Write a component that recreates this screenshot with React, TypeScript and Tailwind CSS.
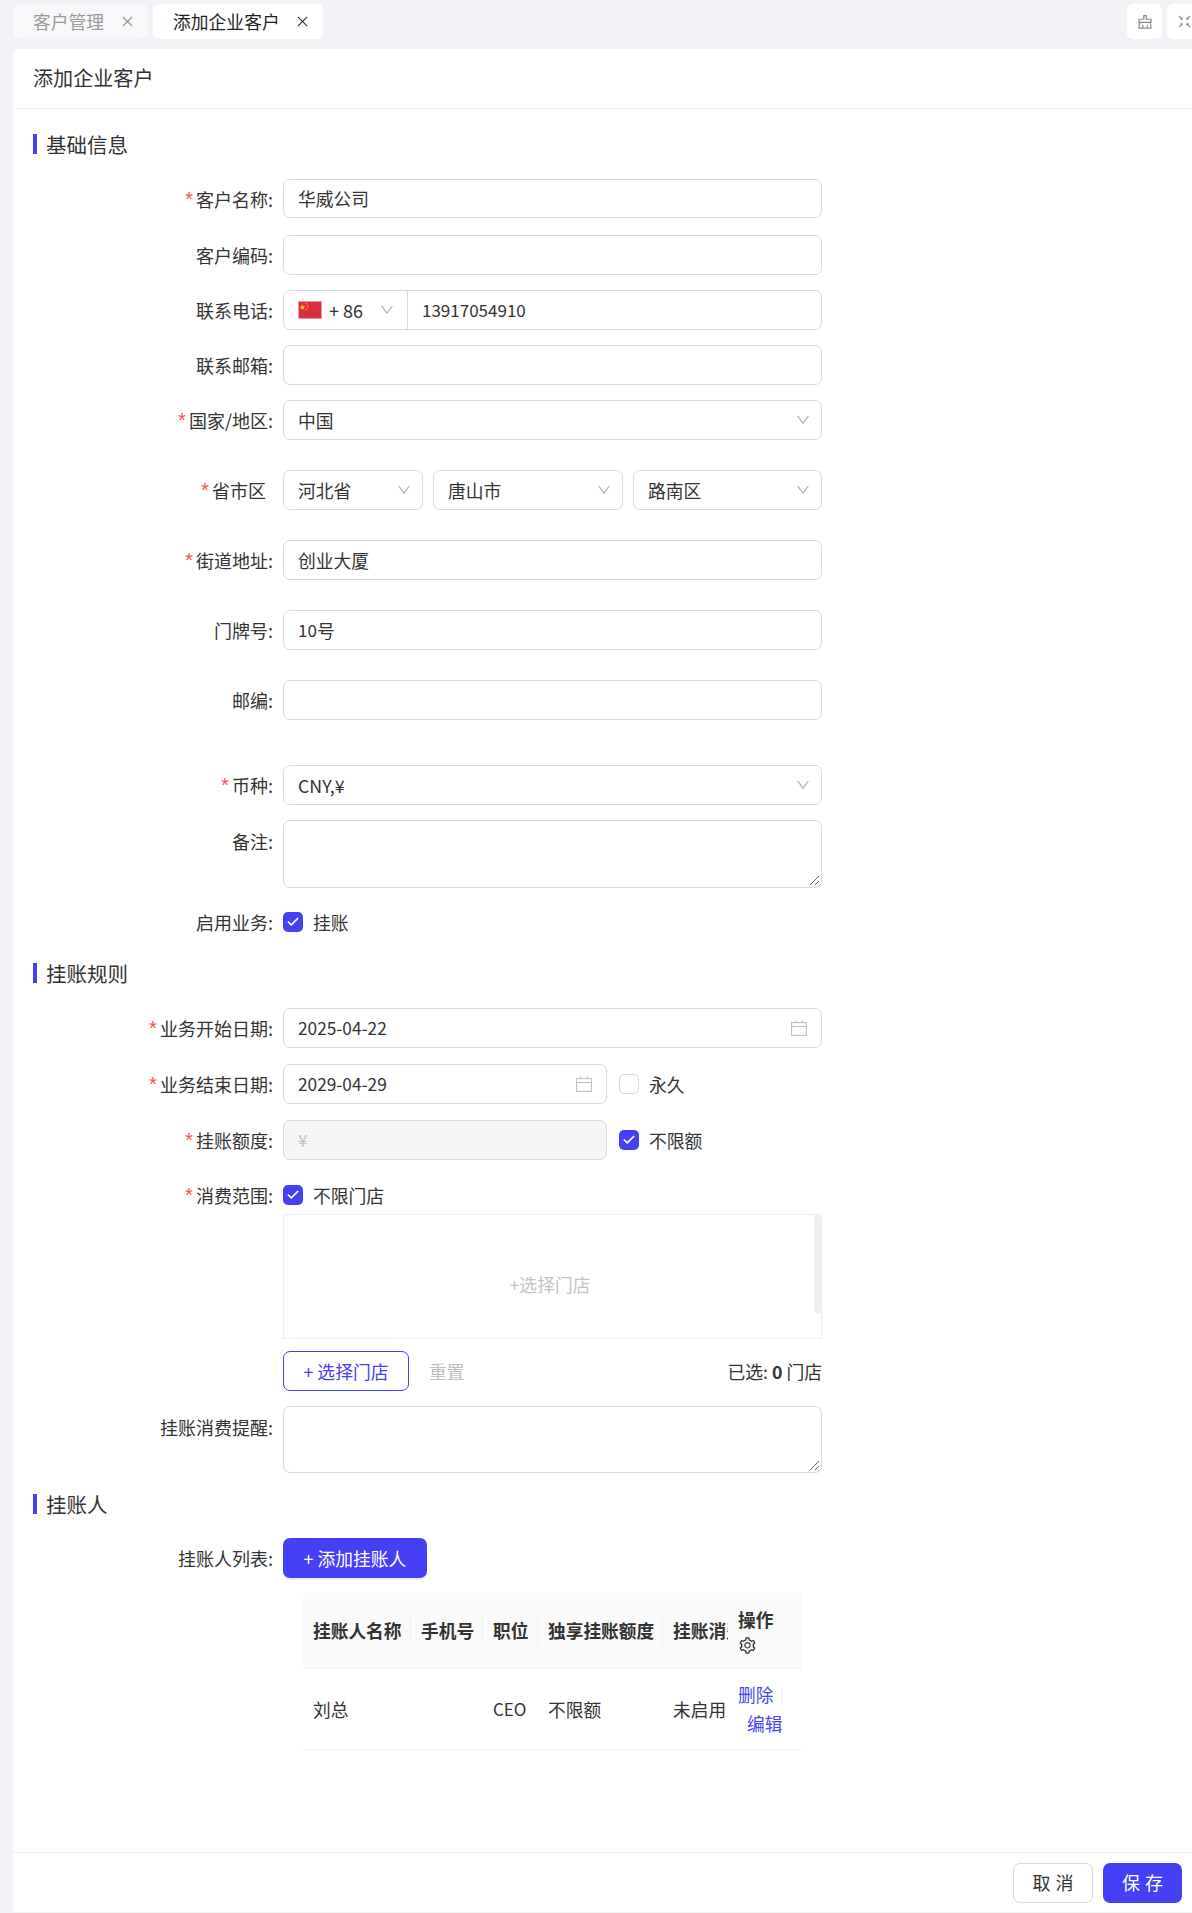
import React from 'react'
import { Check } from 'lucide-react'
import { AiOutlineClear, AiOutlineClose, AiOutlineDown, AiOutlineFullscreenExit, AiOutlineSetting } from 'react-icons/ai'

function Label({ text, required, colon = true }: { text: string; required?: boolean; colon?: boolean }) {
    return (
        <div className="w-[240px] shrink-0 flex items-center justify-end text-[18px] leading-[24px] text-[#333333] whitespace-nowrap">
            {required && <span className="text-[#ff4d4f] mr-[1px] text-[20px] leading-[24px] font-['Liberation_Mono'] translate-y-[3px]">*</span>}
            <span className={colon ? '' : 'mr-[7px]'}>{text}{colon ? ':' : ''}</span>
        </div>
    )
}

function Row({ label, required, colon, className, top, children }: { label: string; required?: boolean; colon?: boolean; className: string; top?: boolean; children: React.ReactNode }) {
    return (
        <div className={`flex gap-[10px] w-[789px] ${top ? 'items-start' : 'items-center'} ${className}`}>
            <div className={top ? 'pt-[9px]' : ''}>
                <Label text={label} required={required} colon={colon} />
            </div>
            {children}
        </div>
    )
}

function Input({ value, className = 'flex-1' }: { value?: React.ReactNode; className?: string }) {
    return (
        <div className={`h-full rounded-[7px] border border-[#d9d9d9] bg-white px-[14px] flex items-center text-[17.8px] text-[#333333] ${className}`}>
            {value}
        </div>
    )
}

function Select({ value, className = 'flex-1' }: { value: string; className?: string }) {
    return (
        <div className={`h-full rounded-[7px] border border-[#d9d9d9] bg-white pl-[14px] pr-[10px] flex items-center justify-between text-[17.8px] text-[#333333] ${className}`}>
            <span>{value}</span>
            <AiOutlineDown size={16} className="text-[#b5b5b5]" />
        </div>
    )
}

function TextArea() {
    return (
        <div className="relative rounded-[7px] border border-[#d9d9d9] bg-white flex-1 h-full">
            <svg className="absolute right-[1px] bottom-[1px]" width="11" height="11" viewBox="0 0 11 11" fill="none" stroke="#666666" strokeWidth="1">
                <path d="M1 10 L10 1 M6 10 L10 6" />
            </svg>
        </div>
    )
}

function Checkbox({ checked }: { checked?: boolean }) {
    return (
        <span className={`w-[20px] h-[20px] rounded-[5px] flex items-center justify-center shrink-0 ${checked ? 'bg-[#4640f5]' : 'border border-[#d9d9d9] bg-white'}`}>
            {checked && <Check size={14} strokeWidth={3} className="text-white" />}
        </span>
    )
}

function CheckLabel({ text, checked }: { text: string; checked?: boolean }) {
    return (
        <div className="flex items-center gap-[10px] text-[17.8px] text-[#333333]">
            <Checkbox checked={checked} />
            <span>{text}</span>
        </div>
    )
}

function Section({ title, className }: { title: string; className: string }) {
    return (
        <div className={`flex items-center gap-[9px] h-[24px] ${className}`}>
            <span className="w-[4px] h-[20px] bg-[#4640f5]" />
            <span className="text-[20.5px] text-[#333333]">{title}</span>
        </div>
    )
}

function CalendarIcon() {
    return (
        <svg width="16" height="16" viewBox="0 0 16 16" fill="none" stroke="#bfbfbf" strokeWidth="1.1" className="shrink-0">
            <rect x="0.6" y="2.6" width="14.8" height="12.8" />
            <path d="M0.6 6.5 H15.4 M4.5 0.5 V2.6 M11.5 0.5 V2.6" />
        </svg>
    )
}

function DateInput({ value, className }: { value: string; className: string }) {
    return (
        <div className={`h-full rounded-[7px] border border-[#d9d9d9] bg-white pl-[14px] pr-[14px] flex items-center justify-between text-[17.3px] text-[#333333] ${className}`}>
            <span>{value}</span>
            <CalendarIcon />
        </div>
    )
}

function Flag() {
    return (
        <svg width="24" height="18" viewBox="0 0 24 18" className="shrink-0">
            <rect width="24" height="18" fill="#f3c6cb" />
            <rect x="0.7" y="0.7" width="22.6" height="16.6" fill="#d8303f" />
            <path d="M4.5 3 L5.3 5.2 L7.6 5.2 L5.8 6.6 L6.4 8.8 L4.5 7.5 L2.6 8.8 L3.2 6.6 L1.4 5.2 L3.7 5.2 Z" fill="#f6c51e" />
            <circle cx="8.4" cy="2.6" r="0.6" fill="#f6c51e" />
            <circle cx="9.8" cy="4.4" r="0.6" fill="#f6c51e" />
            <circle cx="9.8" cy="6.6" r="0.6" fill="#f6c51e" />
            <circle cx="8.4" cy="8.4" r="0.6" fill="#f6c51e" />
        </svg>
    )
}

function Th({ children, className }: { children: React.ReactNode; className: string }) {
    return (
        <div className={`relative flex items-center pl-[10px] overflow-hidden whitespace-nowrap font-bold ${className}`}>
            {children}
            <span className="absolute right-0 top-[24px] h-[28px] w-px bg-[#f0f0f0]" />
        </div>
    )
}

export default function App() {
    return (
        <div className="w-[1192px] h-[1913px] overflow-hidden bg-[#f0f2f6] flex flex-col" style={{ fontFamily: '"Noto Sans CJK SC", "Liberation Sans", sans-serif' }}>
            {/* tabs */}
            <div className="h-[49px] shrink-0 pt-[4px] pl-[13px] flex gap-[5px] items-start">
                <div className="w-[135px] h-[35px] rounded-[6px] bg-[#f7f8fa] flex items-center pl-[20px] pr-[13px] justify-between text-[17.8px] text-[#9a9a9a]">
                    <span>客户管理</span>
                    <AiOutlineClose size={15} className="text-[#8c8c8c]" />
                </div>
                <div className="w-[170px] h-[35px] rounded-[6px] bg-white flex items-center pl-[20px] pr-[13px] justify-between text-[17.8px] text-[#1f1f1f]">
                    <span>添加企业客户</span>
                    <AiOutlineClose size={15} className="text-[#333333]" />
                </div>
                <div className="ml-auto flex gap-[5px] -mr-[10px]">
                    <div className="w-[35px] h-[35px] rounded-[6px] bg-white flex items-center justify-center"><AiOutlineClear size={18} className="text-[#8c8c8c]" /></div>
                    <div className="w-[35px] h-[35px] rounded-[6px] bg-white flex items-center justify-center"><AiOutlineFullscreenExit size={17} className="text-[#8c8c8c]" /></div>
                </div>
            </div>

            {/* card */}
            <div className="ml-[13px] h-[1863px] shrink-0 bg-white rounded-tl-[6px] flex flex-col">
                <div className="h-[60px] shrink-0 border-b border-[#f2f2f2] pl-[20px] flex items-center text-[20.1px] text-[#333333]">
                    添加企业客户
                </div>

                <div className="flex-1 pl-[20px]">
                    <Section title="基础信息" className="mt-[23px]" />
                    <Row label="客户名称" required className="h-[39px] mt-[23px]"><Input value="华威公司" /></Row>
                    <Row label="客户编码" className="h-[40px] mt-[17px]"><Input /></Row>
                    <Row label="联系电话" className="h-[40px] mt-[15px]">
                        <div className="flex-1 h-full rounded-[7px] border border-[#d9d9d9] flex items-center text-[17px] text-[#333333]">
                            <div className="w-[124px] h-full border-r border-[#d9d9d9] pl-[14px] pr-[12px] flex items-center">
                                <Flag />
                                <span className="ml-[7px] text-[18px]">+ 86</span>
                                <AiOutlineDown size={16} className="ml-auto text-[#b5b5b5]" />
                            </div>
                            <span className="pl-[14px]">13917054910</span>
                        </div>
                    </Row>
                    <Row label="联系邮箱" className="h-[40px] mt-[15px]"><Input /></Row>
                    <Row label="国家/地区" required className="h-[40px] mt-[15px]"><Select value="中国" /></Row>
                    <Row label="省市区" required colon={false} className="h-[40px] mt-[30px]">
                        <div className="flex-1 h-full flex gap-[10px]">
                            <Select value="河北省" className="w-[140px]" />
                            <Select value="唐山市" className="w-[190px]" />
                            <Select value="路南区" className="w-[189px]" />
                        </div>
                    </Row>
                    <Row label="街道地址" required className="h-[40px] mt-[30px]"><Input value="创业大厦" /></Row>
                    <Row label="门牌号" className="h-[40px] mt-[30px]"><Input value={<><span className="text-[17px]">10</span>号</>} /></Row>
                    <Row label="邮编" className="h-[40px] mt-[30px]"><Input /></Row>
                    <Row label="币种" required className="h-[40px] mt-[45px]"><Select value="CNY,¥" /></Row>
                    <Row label="备注" top className="h-[68px] mt-[15px]"><TextArea /></Row>
                    <Row label="启用业务" className="h-[24px] mt-[22px]"><CheckLabel text="挂账" checked /></Row>

                    <Section title="挂账规则" className="mt-[27px]" />
                    <Row label="业务开始日期" required className="h-[40px] mt-[23px]"><DateInput value="2025-04-22" className="flex-1" /></Row>
                    <Row label="业务结束日期" required className="h-[40px] mt-[16px]">
                        <DateInput value="2029-04-29" className="w-[324px]" />
                        <div className="ml-[2px]"><CheckLabel text="永久" /></div>
                    </Row>
                    <Row label="挂账额度" required className="h-[40px] mt-[16px]">
                        <div className="w-[324px] h-full rounded-[7px] border border-[#d9d9d9] bg-[#f5f5f5] px-[14px] flex items-center text-[17px] text-[#bfbfbf]">¥</div>
                        <div className="ml-[2px]"><CheckLabel text="不限额" checked /></div>
                    </Row>
                    <Row label="消费范围" required className="h-[24px] mt-[23px]"><CheckLabel text="不限门店" checked /></Row>

                    <div className="ml-[250px] w-[539px] mt-[7px]">
                        <div className="relative h-[125px] border border-[#eeeeee] pt-[15px] pr-[5px] flex items-center justify-center text-[17.8px] text-[#c4c4c4]">
                            <span>+选择门店</span>
                            <span className="absolute right-0 top-0 w-[7px] h-[98px] rounded-full bg-[#eeeeee]" />
                        </div>
                        <div className="mt-[12px] h-[40px] flex items-center text-[17.8px]">
                            <div className="w-[126px] h-full rounded-[7px] border border-[#4640f5] text-[#4640f5] flex items-center justify-center">+ 选择门店</div>
                            <span className="ml-[20px] text-[#bfbfbf]">重置</span>
                            <span className="ml-auto text-[#333333]">已选: <b className="font-bold">0</b> 门店</span>
                        </div>
                    </div>
                    <Row label="挂账消费提醒" top className="h-[67px] mt-[15px]"><TextArea /></Row>

                    <Section title="挂账人" className="mt-[19px]" />
                    <Row label="挂账人列表" className="h-[40px] mt-[22px]">
                        <div className="w-[144px] h-full rounded-[7px] bg-[#4640f5] text-white flex items-center justify-center text-[17.8px] shadow-[0_2px_0_rgba(70,64,245,0.1)]">+ 添加挂账人</div>
                    </Row>

                    <div className="ml-[270px] w-[499px] mt-[15px] text-[17.7px] text-[#333333]">
                        <div className="h-[76px] bg-[#fafafa] border-b border-[#f0f0f0] flex">
                            <Th className="w-[108px]">挂账人名称</Th>
                            <Th className="w-[72px]">手机号</Th>
                            <Th className="w-[55px]">职位</Th>
                            <Th className="w-[125px]">独享挂账额度</Th>
                            <div className="w-[65px] pl-[10px] overflow-hidden whitespace-nowrap font-bold flex items-center">挂账消费提醒</div>
                            <div className="w-[74px] pl-[10px] font-bold flex flex-col justify-center gap-[5px]">
                                <span className="leading-[24px]">操作</span>
                                <AiOutlineSetting size={19} />
                            </div>
                        </div>
                        <div className="h-[81px] border-b border-[#f0f0f0] flex items-center">
                            <div className="w-[108px] pl-[10px]">刘总</div>
                            <div className="w-[72px]" />
                            <div className="w-[55px] pl-[10px] text-[17px]">CEO</div>
                            <div className="w-[125px] pl-[10px]">不限额</div>
                            <div className="w-[65px] pl-[10px] whitespace-nowrap">未启用</div>
                            <div className="w-[74px] pl-[10px] text-[#4a45f0]">
                                <div className="flex items-center h-[29px]">
                                    <span>删除</span>
                                    <span className="ml-[8px] w-px h-[18px] bg-[#f0f0f0]" />
                                </div>
                                <div className="pl-[9px] h-[29px] flex items-center">编辑</div>
                            </div>
                        </div>
                    </div>
                </div>

                <div className="h-[60px] shrink-0 border-t border-[#eeeeee] flex items-center justify-end gap-[10px] pr-[10px] text-[18px]">
                    <div className="w-[80px] h-[40px] rounded-[7px] border border-[#d9d9d9] text-[#333333] flex items-center justify-center tracking-[5px] pl-[5px]">取消</div>
                    <div className="w-[79px] h-[40px] rounded-[7px] bg-[#4640f5] text-white flex items-center justify-center tracking-[5px] pl-[5px]">保存</div>
                </div>
            </div>
        </div>
    )
}
